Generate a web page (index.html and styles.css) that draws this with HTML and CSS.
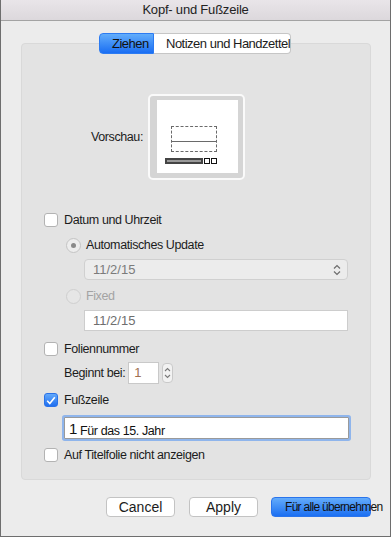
FILE: index.html
```html
<!DOCTYPE html>
<html lang="de">
<head>
  <meta charset="UTF-8">
  <meta name="viewport" content="width=device-width, initial-scale=1.0">
  <title>Kopf- und Fußzeile</title>
  <link rel="stylesheet" href="styles.css">
</head>
<body>
  <div class="window">
    <div class="titlebar">Kopf- und Fußzeile</div>

    <div class="content">
      <div class="tabs">
        <span class="tab active">Ziehen</span>
        <span class="tab">Notizen und Handzettel</span>
      </div>

      <div class="group">
        <div class="preview-row">
          <span class="preview-label">Vorschau:</span>
          <div class="preview">
            <div class="page">
              <div class="dash-box"><div class="dash-top"></div><div class="dash-bottom"></div></div>
              <div class="footer-bar">
                <span class="bar"></span><span class="sq"></span><span class="sq"></span>
              </div>
            </div>
          </div>
        </div>

        <label class="row r-datum"><span class="check"></span>Datum und Uhrzeit</label>
        <label class="row indent r-auto"><span class="radio on"></span>Automatisches Update</label>
        <div class="select r-select">11/2/15
          <svg class="chev" width="8" height="12" viewBox="0 0 8 12"><path d="M1 4.5 L4 1.5 L7 4.5 M1 7.5 L4 10.5 L7 7.5" fill="none" stroke="#6d6d6d" stroke-width="1.2"/></svg>
        </div>
        <label class="row indent disabled r-fixed"><span class="radio off"></span>Fixed</label>
        <div class="field r-field">11/2/15</div>

        <label class="row r-folie"><span class="check"></span>Foliennummer</label>
        <div class="row r-begin">
          <span class="begin-label">Beginnt bei:</span>
          <span class="num">1</span>
          <span class="stepper">
            <svg width="9" height="16" viewBox="0 0 9 16"><path d="M2 6 L4.5 3.5 L7 6 M2 10 L4.5 12.5 L7 10" fill="none" stroke="#7a7a7a" stroke-width="1.1"/></svg>
          </span>
        </div>

        <label class="row r-fuss"><span class="check checked">
          <svg width="10" height="9" viewBox="0 0 10 9"><path d="M1.2 4.8 L3.8 7.5 L8.8 1.2" fill="none" stroke="#fff" stroke-width="1.6"/></svg>
        </span>Fußzeile</label>
        <div class="footer-input r-footer"><span class="one">1</span> Für das 15. Jahr</div>

        <label class="row r-titel"><span class="check"></span>Auf Titelfolie nicht anzeigen</label>
      </div>

      <div class="buttons">
        <button class="btn">Cancel</button>
        <button class="btn">Apply</button>
        <button class="btn primary">Für alle übernehmen</button>
      </div>
    </div>
  </div>
</body>
</html>
```

FILE: styles.css
```css
* {
  box-sizing: border-box;
}
body {
  margin: 0;
  font-family: "Liberation Sans", Arial, sans-serif;
  font-size: 12.5px;
  letter-spacing: -0.4px;
  color: #1c1c1c;
  background: #ececec;
}
.window {
  width: 391px;
  height: 537px;
  background: #ececec;
  border-left: 1px solid #6e6e6e;
  border-right: 1px solid #6e6e6e;
  border-bottom: 1px solid #6e6e6e;
}
.titlebar {
  height: 21px;
  line-height: 20px;
  text-align: center;
  font-size: 13px;
  letter-spacing: -0.2px;
  color: #222;
  background: linear-gradient(#e9e5e9, #dcd8dc);
  border-bottom: 1px solid #a3a3a3;
}
.content {
  padding: 12px 19px 0 20px;
}

/* tabs */
.tabs {
  display: flex;
  position: relative;
  z-index: 1;
  height: 21px;
  padding-left: 78px;
}
.tab {
  height: 21px;
  width: 137px;
  line-height: 20px;
  background: #fff;
  border: 1px solid #c6c6c6;
  border-left: none;
  padding-left: 12px;
  border-radius: 0 4px 4px 0;
  font-size: 13px;
  letter-spacing: -0.5px;
  white-space: nowrap;
}
.tab.active {
  width: 55px;
  background: linear-gradient(#62adfb, #1a6ef3);
  border: 1px solid #2c7bf2;
  border-radius: 4px 0 0 4px;
  padding-left: 12px;
  color: #111;
}

/* group box */
.group {
  margin-top: -11px;
  height: 437px;
  background: #e3e3e3;
  border: 1px solid #d9d9d9;
  border-radius: 4px;
  padding: 0 0 0 22px;
}
.preview-row {
  display: flex;
  align-items: center;
  margin-top: 50px;
  height: 86px;
}
.preview-label {
  width: 104px;
  padding-right: 5px;
  text-align: right;
}
.preview {
  width: 97px;
  height: 86px;
  border: 2px solid #fafafa;
  border-radius: 5px;
  background: #d5d5d5;
  padding: 4px 5px 5px 7px;
}
.page {
  height: 73px;
  background: #fff;
  padding: 26px 0 0 8px;
}
.dash-box {
  width: 46px;
  margin-left: 6px;
  border: 1px dashed #6a6a6a;
}
.dash-top {
  height: 15px;
  border-bottom: 1px solid #6a6a6a;
}
.dash-bottom {
  height: 9px;
}
.footer-bar {
  display: flex;
  margin-top: 6px;
}
.bar {
  width: 38px;
  height: 6px;
  border: 2px solid #444;
  background: #fff;
  box-shadow: inset 0 0 0 1px #999;
}
.sq {
  width: 6px;
  height: 6px;
  border: 1px solid #111;
  margin-left: 1px;
}

/* rows */
.row {
  display: flex;
  align-items: center;
  height: 16px;
}
.indent {
  padding-left: 22px;
}
.disabled {
  color: #a3a3a3;
}
.check {
  width: 14px;
  height: 14px;
  background: #fff;
  border: 1px solid #b3b3b3;
  border-radius: 3px;
  margin-right: 6px;
  display: flex;
  align-items: center;
  justify-content: center;
}
.check.checked {
  background: linear-gradient(#63a9fb, #1f6ff0);
  border-color: #2a72e8;
}
.radio {
  width: 15px;
  height: 15px;
  border-radius: 50%;
  border: 1px solid #c4c4c4;
  background: #ededed;
  margin-right: 5px;
  display: flex;
  align-items: center;
  justify-content: center;
}
.radio.on::after {
  content: "";
  width: 5px;
  height: 5px;
  border-radius: 50%;
  background: #8a8a8a;
}
.radio.off {
  background: #e6e6e6;
  border-color: #cfcfcf;
}
.select,
.field {
  width: 264px;
  height: 21px;
  margin-left: 40px;
  padding-left: 8px;
  line-height: 20px;
  font-size: 13px;
  letter-spacing: 0;
  color: #7b7b7b;
}
.select {
  display: flex;
  justify-content: space-between;
  align-items: center;
  background: #ececec;
  border: 1px solid #d0d0d0;
  border-radius: 4px;
  padding-right: 6px;
}
.field {
  background: #fff;
  border: 1px solid #cdcdcd;
  color: #6e6e6e;
}
.begin-label {
  margin-left: 20px;
}
.r-begin {
  height: 22px;
}
.num {
  width: 31px;
  height: 22px;
  margin-left: 3px;
  background: #fff;
  border: 1px solid #c9c9c9;
  padding-left: 5px;
  line-height: 20px;
  font-size: 13px;
  color: #a07050;
}
.stepper {
  width: 11px;
  height: 20px;
  margin-left: 3px;
  border: 1px solid #c9c9c9;
  border-radius: 4px;
  background: #f2f2f2;
  display: flex;
  align-items: center;
  justify-content: center;
}
.footer-input {
  width: 285px;
  height: 22px;
  margin-left: 20px;
  background: #fff;
  border: 1px solid #9a9a9a;
  box-shadow: 0 0 0 2px #8fb5ec;
  border-radius: 1px;
  padding: 2px 0 0 4px;
  color: #111;
}
.one {
  font-size: 15px;
  vertical-align: 1px;
}

.r-datum { margin-top: 32px; }
.r-auto { margin-top: 9px; }
.r-select { margin-top: 6px; }
.r-fixed { margin-top: 8px; }
.r-field { margin-top: 6px; }
.r-folie { margin-top: 10px; }
.r-begin { margin-top: 5px; }
.r-fuss { margin-top: 8px; }
.r-footer { margin-top: 9px; }
.r-titel { margin-top: 8px; }

/* buttons */
.buttons {
  display: flex;
  justify-content: flex-end;
  gap: 14px;
  margin-top: 17px;
}
.btn {
  height: 20px;
  width: 69px;
  font-family: "Liberation Sans", Arial, sans-serif;
  font-size: 14px;
  color: #1c1c1c;
  background: #fff;
  border: 1px solid #c3c3c3;
  border-radius: 4px;
  padding: 0;
}
.btn.primary {
  width: 100px;
  margin-left: -1px;
  font-size: 12px;
  letter-spacing: -0.7px;
  text-align: left;
  padding-left: 13px;
  white-space: nowrap;
  overflow: visible;
  background: linear-gradient(#64acfb, #1b6ff2);
  border-color: #2a74ec;
  color: #111;
}
```
